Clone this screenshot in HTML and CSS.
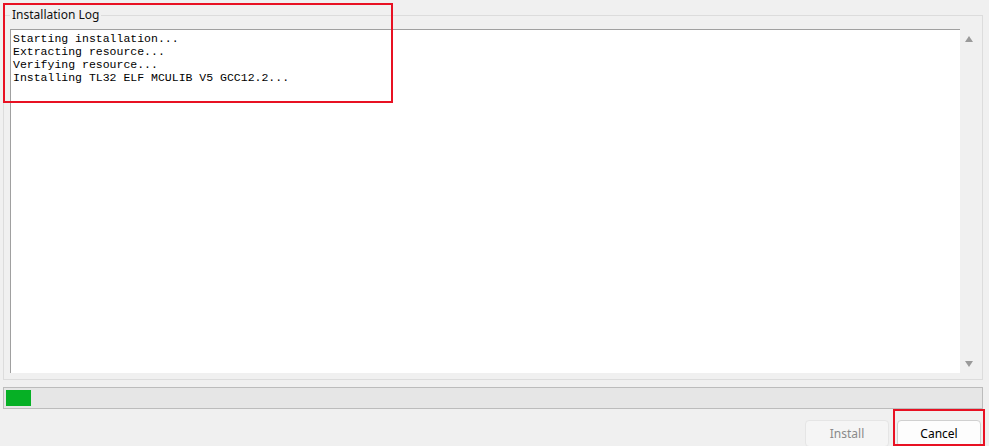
FILE: index.html
```html
<!DOCTYPE html>
<html lang="en">
<head>
    <meta charset="UTF-8">
    <title>Installer</title>
    <link rel="stylesheet" href="styles.css">
</head>
<body>
    <div class="window">
        <fieldset class="log-group">
            <legend>Installation Log</legend>
            <div class="log-box">
                <pre class="log-text">Starting installation...
Extracting resource...
Verifying resource...
Installing TL32 ELF MCULIB V5 GCC12.2...</pre>
                <div class="scrollbar">
                    <span class="arrow arrow-up"></span>
                    <span class="arrow arrow-down"></span>
                </div>
            </div>
        </fieldset>

        <div class="progress">
            <div class="progress-chunk"></div>
        </div>

        <div class="buttons">
            <button class="btn" disabled>Install</button>
            <button class="btn btn-cancel">Cancel</button>
        </div>

        <!-- annotation boxes -->
        <div class="mark mark-log"></div>
        <div class="mark mark-cancel"></div>
    </div>
</body>
</html>
```

FILE: styles.css
```css
html, body {
    margin: 0;
    padding: 0;
    background: #f0f0f0;
}

body {
    font-family: 'Noto Sans', 'Liberation Sans', sans-serif;
    font-size: 12px;
    color: #1a1a1a;
}

.window {
    position: relative;
    width: 989px;
    height: 446px;
    padding: 7px 6px 0 3px;
    box-sizing: border-box;
    display: flex;
    flex-direction: column;
    overflow: hidden;
}

.log-group {
    margin: 0;
    padding: 6px 5px 6px 6px;
    border: 1px solid #dcdcdc;
    min-width: 0;
}

.log-group legend {
    margin-left: 0;
    padding: 0 2px;
    font-size: 12px;
    line-height: 16px;
    color: #111;
}

.log-box {
    display: flex;
    height: 344px;
}

.log-text {
    flex: 1;
    margin: 0;
    padding: 2px 2px 1px;
    background: #fff;
    border-top: 1px solid #a0a0a0;
    border-left: 1px solid #a0a0a0;
    font-family: 'Liberation Mono', 'DejaVu Sans Mono', monospace;
    font-size: 11.5px;
    line-height: 13px;
    color: #000;
}

.scrollbar {
    width: 17px;
    background: #f0f0f0;
    display: flex;
    flex-direction: column;
    justify-content: space-between;
    align-items: center;
    padding: 7px 0 6px;
}

.arrow {
    width: 0;
    height: 0;
    border-left: 4.5px solid transparent;
    border-right: 4.5px solid transparent;
}

.arrow-up {
    border-bottom: 6px solid #9a9a9a;
}

.arrow-down {
    border-top: 6px solid #9a9a9a;
}

.progress {
    margin-top: 7px;
    height: 22px;
    box-sizing: border-box;
    border: 1px solid #bcbcbc;
    background: #e6e6e6;
    padding: 2px;
}

.progress-chunk {
    width: 25px;
    height: 16px;
    background: #06b025;
}

.buttons {
    display: flex;
    justify-content: flex-end;
    gap: 8px;
    margin-top: 11px;
    padding-right: 2px;
}

.btn {
    width: 84px;
    height: 27px;
    border: 1px solid #d0d0d0;
    border-radius: 4px;
    background: #fdfdfd;
    font-family: 'Noto Sans', 'Liberation Sans', sans-serif;
    font-size: 12px;
    color: #000;
}

.btn[disabled] {
    background: #f5f5f5;
    border-color: #e5e5e5;
    color: #8a8a8a;
}

.mark {
    position: absolute;
    border: 2px solid #e81123;
    box-sizing: border-box;
}

.mark-log {
    left: 3px;
    top: 3px;
    width: 390px;
    height: 100px;
}

.mark-cancel {
    left: 893px;
    top: 409px;
    width: 92px;
    height: 37px;
}
```
